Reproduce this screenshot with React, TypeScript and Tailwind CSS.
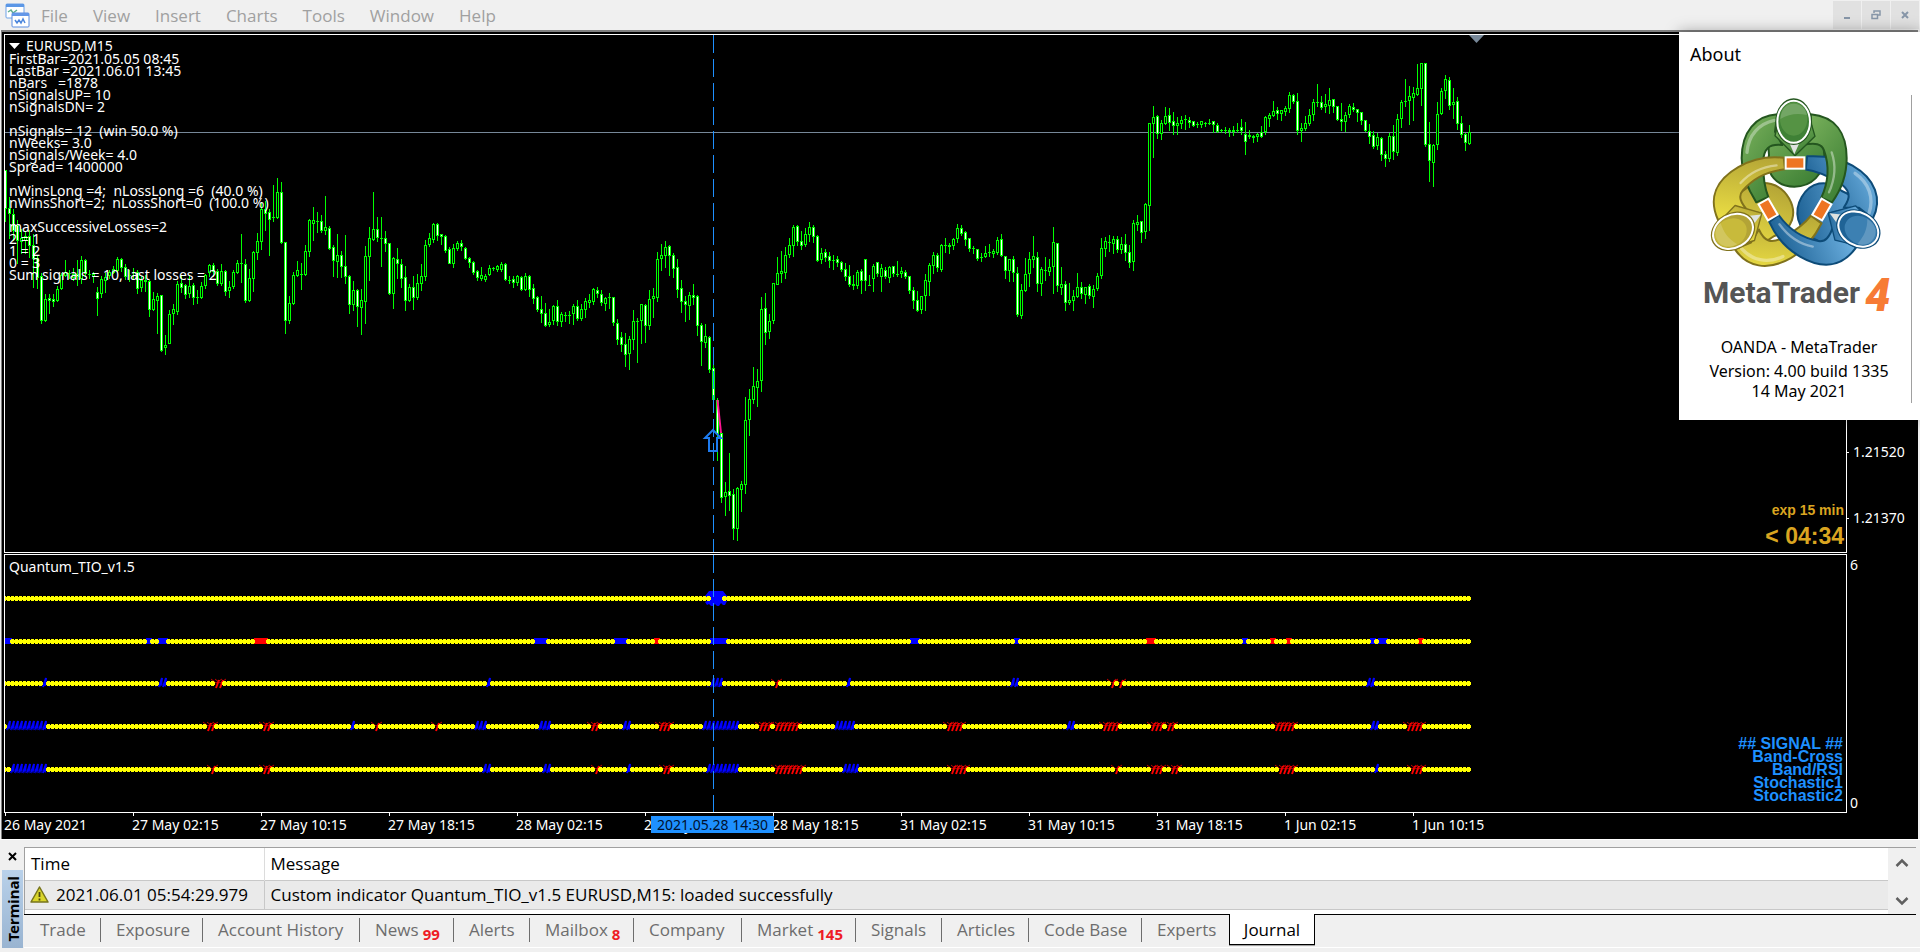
import type { ReactNode } from "react";

const SANS = "font-['Open_Sans','Noto_Sans',sans-serif]";
const CHART_FONT = "font-['Noto_Sans','DejaVu_Sans',sans-serif]";

const MENU = ["File", "View", "Insert", "Charts", "Tools", "Window", "Help"];

const COMMENT = [
  "FirstBar=2021.05.05 08:45",
  "LastBar =2021.06.01 13:45",
  "nBars   =1878",
  "nSignalsUP= 10",
  "nSignalsDN= 2",
  "",
  "nSignals= 12  (win 50.0 %)",
  "nWeeks= 3.0",
  "nSignals/Week= 4.0",
  "Spread= 1400000",
  "",
  "nWinsLong =4;  nLossLong =6  (40.0 %)",
  "nWinsShort=2;  nLossShort=0  (100.0 %)",
  "",
  "maxSuccessiveLosses=2",
  "2 = 1",
  "1 = 2",
  "0 = 3",
  "Sum signals = 10, last losses = 2",
];

const TIMES = [
  "26 May 2021",
  "27 May 02:15",
  "27 May 10:15",
  "27 May 18:15",
  "28 May 02:15",
  "28 May 10:15",
  "28 May 18:15",
  "31 May 02:15",
  "31 May 10:15",
  "31 May 18:15",
  "1 Jun 02:15",
  "1 Jun 10:15",
];

const TABS: { label: string; width: string; count?: number }[] = [
  { label: "Trade", width: "w-[76px]" },
  { label: "Exposure", width: "w-[102px]" },
  { label: "Account History", width: "w-[157px]" },
  { label: "News", width: "w-[94px]", count: 99 },
  { label: "Alerts", width: "w-[76px]" },
  { label: "Mailbox", width: "w-[104px]", count: 8 },
  { label: "Company", width: "w-[108px]" },
  { label: "Market", width: "w-[114px]", count: 145 },
  { label: "Signals", width: "w-[86px]" },
  { label: "Articles", width: "w-[87px]" },
  { label: "Code Base", width: "w-[113px]" },
  { label: "Experts", width: "w-[87px]" },
];

// one bar per record: high, body top, body bottom, low, direction
const BARS = `
170 170 208 221 d,197 208 213 238 d,209 214 230 240 d,220 225 240 263 d,229 238 241 253 u,231 236 240 253 u,230 236 245 257 d,234 245 258 287 d,
255 258 277 288 d,273 276 320 323 d,294 299 320 321 u,294 298 300 313 d,294 299 301 306 d,286 289 300 301 u,273 275 288 289 u,260 272 275 276 u,
270 273 273 278 u,268 274 277 280 u,260 274 276 285 d,256 260 278 283 u,259 260 273 276 d,270 274 274 278 u,272 274 276 282 u,287 292 298 315 d,
276 279 293 297 u,273 277 280 292 u,270 272 275 278 u,266 269 272 273 u,257 259 270 272 u,258 259 267 271 d,264 267 276 279 d,270 275 275 281 u,
268 272 272 279 u,270 272 288 293 d,276 280 287 291 u,275 280 281 291 u,280 281 309 316 d,292 299 309 310 u,293 296 300 333 u,295 295 350 351 d,
335 345 347 354 u,310 314 343 343 u,304 309 313 324 u,281 284 311 314 u,275 283 287 292 d,284 285 294 298 d,275 286 293 297 u,283 285 297 304 d,
290 297 297 303 u,282 286 297 298 u,274 275 285 288 u,264 265 272 276 u,263 265 271 276 d,269 271 283 285 d,264 271 283 285 u,270 271 291 295 d,
281 287 290 297 u,270 272 286 288 u,260 263 272 273 u,234 263 263 282 u,259 264 300 302 d,269 278 300 301 u,251 252 278 291 u,233 241 252 259 u,
203 209 241 249 u,201 209 213 230 d,209 212 219 255 d,185 217 217 221 u,178 192 217 218 u,182 192 242 243 d,242 242 320 333 d,296 303 320 323 u,
272 275 303 304 u,261 270 275 276 u,263 274 274 289 u,245 251 274 275 u,219 220 251 256 u,207 220 223 240 u,212 221 221 232 u,215 221 230 232 d,
196 227 230 234 u,226 228 248 249 d,245 247 260 276 d,234 255 261 277 u,251 255 266 277 d,235 266 276 283 d,275 276 304 313 d,281 290 304 310 u,
289 290 306 326 d,289 300 307 334 u,246 256 301 323 u,227 238 256 280 u,192 229 239 240 u,217 229 237 241 d,217 238 238 266 u,231 238 243 251 d,
243 243 293 294 d,257 258 293 308 u,248 259 263 278 d,259 264 278 287 d,266 277 300 310 d,284 287 300 301 u,276 287 297 309 d,274 283 297 299 u,
264 276 283 290 u,240 245 276 280 u,233 238 244 246 u,223 224 239 242 u,223 224 235 240 d,234 234 236 244 d,235 236 250 252 d,247 249 263 263 d,
244 248 263 267 u,241 243 248 250 u,240 243 246 250 d,247 248 258 259 d,257 258 262 267 d,261 262 272 274 d,270 271 277 280 d,267 275 278 280 u,
274 276 279 281 u,265 268 274 275 u,267 268 268 270 u,265 266 269 271 u,262 264 269 271 u,263 264 279 280 d,276 280 280 283 u,276 279 282 287 d,
275 276 282 285 u,276 277 289 290 d,273 276 289 290 u,275 276 289 296 d,284 288 298 303 d,296 297 309 311 d,296 309 313 322 d,303 313 325 326 d,
309 322 324 326 u,305 306 320 324 u,300 306 321 325 d,312 314 321 326 u,312 315 315 321 u,311 315 315 323 u,304 306 313 324 u,300 306 318 320 d,
304 309 318 320 u,298 301 309 317 u,294 300 302 307 u,288 289 301 304 u,287 290 293 297 d,290 294 302 305 d,297 298 303 310 u,293 297 297 308 u,
297 297 322 325 d,319 323 339 344 d,332 337 344 351 d,333 344 354 366 d,336 339 353 369 u,310 321 339 349 u,318 321 321 362 u,304 304 320 343 u,
304 305 325 342 d,290 299 325 329 u,288 296 298 317 u,252 259 297 301 u,244 255 258 270 u,241 247 255 267 u,245 246 255 275 d,253 255 268 277 d,
259 267 289 297 d,280 288 301 312 d,296 301 304 321 d,292 295 305 319 u,284 295 297 304 d,295 296 325 335 d,323 325 341 365 d,324 336 342 347 u,
336 337 369 372 d,365 368 399 400 d,398 400 433 460 d,432 433 497 502 d,482 492 496 515 u,453 491 495 510 d,489 494 528 539 d,487 488 528 540 u,
481 484 489 511 u,397 420 484 493 u,389 399 419 435 u,367 386 399 403 u,369 381 387 406 u,297 309 380 391 u,293 308 332 344 d,314 321 331 338 u,
283 283 320 323 u,257 273 284 284 u,251 271 273 282 u,247 255 272 278 u,238 245 254 257 u,225 227 245 256 u,225 226 241 245 d,231 241 245 249 d,
228 234 244 246 u,222 227 234 241 u,225 227 236 242 d,235 236 260 261 d,248 253 259 263 u,249 252 257 261 d,252 256 260 267 d,255 260 260 269 u,
256 259 262 266 d,261 262 269 271 d,263 269 276 280 d,265 276 284 286 d,275 284 285 289 u,270 272 285 288 u,269 271 280 293 d,259 259 280 290 d,
275 285 285 285 u,264 266 278 291 u,262 262 273 276 d,264 268 276 291 u,267 270 276 278 d,266 267 277 282 u,266 266 273 276 d,261 274 274 276 u,
267 271 273 277 u,270 272 276 278 d,276 276 290 293 d,287 290 300 308 d,291 300 310 311 d,296 296 309 313 u,274 280 295 310 u,263 265 281 295 u,
252 255 265 273 u,253 255 267 271 d,244 245 269 271 u,238 245 245 252 u,243 245 246 253 u,238 239 245 249 u,224 228 238 242 u,225 228 233 235 d,
231 232 239 245 d,238 238 248 251 d,246 248 248 253 u,249 249 258 260 d,253 257 257 261 u,246 253 256 257 u,244 252 252 256 u,249 251 253 257 u,
237 240 252 254 u,234 239 255 256 d,256 256 270 278 d,259 259 270 281 u,256 259 272 281 d,267 273 314 316 d,284 290 315 318 u,258 274 290 291 u,
252 259 273 286 u,236 256 259 267 u,252 257 283 291 d,267 269 283 295 u,257 270 270 280 u,259 267 271 275 u,227 242 266 293 u,243 243 285 291 d,
267 284 287 294 u,281 284 302 310 d,283 300 302 304 u,290 296 300 310 u,273 287 296 297 u,282 287 293 298 d,287 287 294 303 u,284 286 295 298 d,
285 289 296 307 u,273 276 288 290 u,238 248 275 278 u,237 241 248 256 u,235 242 242 251 u,236 239 243 253 u,236 239 249 252 d,237 244 249 253 u,
234 244 252 260 d,245 252 262 267 d,220 223 261 270 u,215 222 224 230 u,221 221 232 242 d,203 204 231 238 u,123 123 205 230 u,106 117 123 157 u,
115 116 133 138 d,120 123 133 139 u,107 116 123 124 u,108 115 122 130 d,112 121 125 134 d,117 123 125 134 u,116 120 123 128 u,115 119 119 129 u,
117 120 122 127 d,121 121 125 126 d,122 124 124 127 u,121 121 124 127 u,122 123 123 126 u,119 123 123 124 u,121 121 124 132 d,123 125 131 132 d,
129 130 130 132 u,127 130 130 133 u,128 130 131 136 u,126 130 131 135 u,123 130 130 132 u,119 127 130 134 d,122 134 141 154 d,130 135 136 138 u,
135 136 137 142 u,133 134 136 141 u,126 132 136 137 d,116 117 131 134 u,113 115 118 126 u,101 111 115 116 u,107 110 113 119 d,110 110 113 120 u,
106 108 111 115 u,92 95 108 112 u,94 95 101 103 d,93 101 130 134 d,123 128 130 141 u,116 123 128 130 u,109 115 123 125 u,99 102 114 120 u,
84 102 102 106 u,96 102 107 109 d,94 104 106 112 u,88 100 105 113 u,99 99 106 112 d,106 106 119 120 d,103 119 121 130 d,112 115 121 131 u,
104 106 114 117 u,103 107 109 111 d,109 109 112 121 d,112 112 120 124 d,120 120 130 131 d,124 131 136 143 d,131 135 146 148 d,133 137 145 149 u,
137 138 154 160 d,151 154 158 166 d,133 136 158 161 u,125 136 151 159 d,114 119 152 155 u,100 102 118 127 u,79 101 101 106 u,86 96 100 124 u,
87 93 97 120 u,64 88 94 95 u,63 63 88 105 u,63 63 144 146 d,122 144 160 181 d,144 145 162 186 u,102 114 144 149 u,88 91 113 114 u,
75 79 90 98 u,77 80 105 109 d,88 102 104 118 u,97 101 123 129 d,116 123 134 137 d,133 134 142 150 d,125 132 143 144 u`
  .trim()
  .split(",")
  .map((record) => {
    const [high, top, bottom, low, dir] = record.trim().split(" ");
    return { high: +high, top: +top, bottom: +bottom, low: +low, down: dir === "d" };
  });

const barX = (i: number) => 5 + 4 * i;

type Run = [from: number, to: number, color: "b" | "r"];

const ROWS: { y: number; kind: "blob" | "square" | "arrow"; runs: Run[] }[] = [
  { y: 598, kind: "blob", runs: [[177, 179, "b"]] },
  {
    y: 641,
    kind: "square",
    runs: [
      [0, 1, "b"], [36, 36, "b"], [39, 40, "b"], [63, 65, "r"], [133, 135, "b"], [153, 155, "b"],
      [163, 163, "r"], [177, 180, "b"], [227, 228, "b"], [253, 253, "b"], [286, 287, "r"], [310, 310, "b"],
      [317, 317, "r"], [321, 321, "r"], [342, 342, "b"], [344, 345, "b"], [354, 354, "r"],
    ],
  },
  {
    y: 683,
    kind: "arrow",
    runs: [
      [10, 10, "b"], [39, 40, "b"], [53, 54, "r"], [121, 121, "b"], [177, 179, "b"], [193, 193, "r"],
      [211, 211, "b"], [252, 253, "b"], [277, 277, "r"], [279, 279, "r"], [341, 342, "b"],
    ],
  },
  {
    y: 726,
    kind: "arrow",
    runs: [
      [1, 10, "b"], [51, 52, "r"], [65, 66, "r"], [87, 87, "b"], [93, 93, "r"], [108, 108, "r"],
      [118, 120, "b"], [134, 136, "b"], [147, 148, "r"], [155, 156, "b"], [164, 166, "r"], [175, 183, "b"],
      [189, 191, "r"], [193, 198, "r"], [208, 212, "b"], [236, 239, "r"], [266, 267, "b"], [275, 278, "r"],
      [287, 289, "r"], [291, 292, "r"], [318, 322, "r"], [342, 343, "b"], [351, 354, "r"],
    ],
  },
  {
    y: 769,
    kind: "arrow",
    runs: [
      [2, 10, "b"], [52, 52, "r"], [65, 66, "r"], [120, 121, "b"], [135, 136, "b"], [148, 148, "r"],
      [156, 156, "b"], [165, 166, "r"], [176, 183, "b"], [193, 199, "r"], [210, 213, "b"], [237, 240, "r"],
      [278, 278, "r"], [287, 289, "r"], [292, 293, "r"], [319, 322, "r"], [343, 343, "b"], [352, 354, "r"],
    ],
  },
];

function Candles() {
  return (
    <g shapeRendering="crispEdges">
      {BARS.map((bar, i) => {
        const x = barX(i);
        const height = bar.bottom - bar.top + 1;
        return (
          <g key={i}>
            <rect x={x} y={bar.high} width={1} height={bar.low - bar.high + 1} fill="#00ff00" />
            <rect x={x - 1} y={bar.top} width={3} height={height} fill="#00ff00" />
            {height > 2 && (
              <rect x={x} y={bar.top + 1} width={1} height={height - 2} fill={bar.down ? "#fff" : "#000"} />
            )}
          </g>
        );
      })}
    </g>
  );
}

function SignalRow({ y, kind, runs }: (typeof ROWS)[number]) {
  const marked = new Map<number, "b" | "r">();
  runs.forEach(([from, to, color]) => {
    for (let i = from; i <= to; i++) marked.set(i, color);
  });
  const dots = BARS.map((_, i) => i).filter((i) => !marked.has(i));
  const marks = [...marked];
  return (
    <g>
      {kind === "square" &&
        marks.map(([i, c]) => (
          <rect key={i} x={barX(i) - 3} y={y - 3} width={6} height={6} fill={c === "b" ? "#0000ff" : "#ff0000"} />
        ))}
      {kind === "arrow" &&
        marks.map(([i, c]) => {
          const x = barX(i) - 1;
          return c === "b" ? (
            <g key={i}>
              <path d={`M${x - 5} ${y + 4}L${x + 1} ${y}L${x + 6} ${y + 4}`} stroke="#00008b" fill="none" />
              <path d={`M${x - 1} ${y + 4}L${x + 2} ${y - 5}L${x + 1} ${y + 3}`} stroke="#0000ff" strokeWidth={2} fill="none" />
            </g>
          ) : (
            <g key={i}>
              <path d={`M${x - 5} ${y - 4}L${x} ${y}L${x + 6} ${y - 4}`} stroke="#c00000" fill="none" />
              <path d={`M${x + 3} ${y - 3}L${x} ${y + 5}`} stroke="#ff0000" strokeWidth={2} fill="none" />
            </g>
          );
        })}
      {kind === "blob" && (
        <path
          d={`M705 ${y - 2}l4-5h14l4 5v2l-4 2 4 1-2 4h-2l-2-2-2 3h-2l-2-2-2 2h-2l-2-2-2 1-2-3 4-2-4-2z`}
          fill="#0000ff"
        />
      )}
      <g fill="#ffff00" shapeRendering="crispEdges">
        {dots.map((i) => (
          <path key={i} d={`M${barX(i) - 2} ${y - 2}h3v1h1v3h-1v1h-3v-1h-1v-3h1z`} />
        ))}
      </g>
    </g>
  );
}

type Person = { id: string; light: string; mid: string; dark: string; turn: string };

const PEOPLE: Person[] = [
  { id: "green", light: "#7db45e", mid: "#3f8136", dark: "#24561f", turn: "" },
  { id: "blue", light: "#74b8e8", mid: "#1f6396", dark: "#0d4b78", turn: "rotate(120 378 587)" },
  { id: "yellow", light: "#f2e545", mid: "#b3a436", dark: "#80721c", turn: "rotate(240 378 587)" },
];

function Figure({ person, part }: { person: Person; part: "body" | "near" | "far" | "head" }) {
  const { id, mid, dark } = person;
  const line = { stroke: dark, strokeWidth: 6, strokeLinejoin: "round" as const };
  if (part === "body") {
    return (
      <g>
        <path d="M300 470C290 380 330 350 376 350s86 30 90 120c0 60-40 95-90 95s-88-35-76-95z" fill={`url(#${id})`} {...line} />
        <path d="M312 408l66 66 68-70-10-24-122 0z" fill={dark} opacity="0.5" />
        <path d="M362 430l14 38 14-38z" fill="#dfe3e0" />
      </g>
    );
  }
  if (part === "far") {
    return (
      <g>
        <path
          d="M218 480C218 400 260 352 325 348L318 400 340 440C300 436 284 450 282 492c0 30 2 70 16 104l-36 16C236 572 218 530 218 480z"
          fill={`url(#${id})`}
          {...line}
        />
        <path d="M234 462C238 410 270 376 316 366" fill="none" stroke="#fff" strokeOpacity="0.35" strokeWidth="10" strokeLinecap="round" />
      </g>
    );
  }
  if (part === "near") {
    return (
      <g>
        <path
          d="M425 348C500 355 533 405 533 480c0 50-16 94-44 132l-32-14c20-44 26-92 8-142C458 436 440 432 400 440l28-36z"
          fill={`url(#${id})`}
          {...line}
        />
        <path d="M488 462c14 40 8 84-8 120" fill="none" stroke="#fff" strokeOpacity="0.4" strokeWidth="7" strokeLinecap="round" />
      </g>
    );
  }
  return (
    <g>
      <path d="M326 380l-8 32 60 60 60-58-10-34z" fill={`url(#${id})`} {...line} strokeWidth="4" />
      <path d="M362 436l14 32 14-32z" fill="#dfe3e0" />
      <ellipse cx="374" cy="370" rx="55" ry="70" fill={dark} />
      <ellipse cx="374" cy="370" rx="49" ry="63" fill={mid} stroke="#fff" strokeWidth="6" />
      <ellipse cx="374" cy="362" rx="41" ry="50" fill={person.light} opacity="0.35" />
      <path d="M334 362c2-30 18-46 40-46s38 16 40 34c-28-6-54-4-80 12z" fill="#fff" opacity="0.18" />
    </g>
  );
}

function Logo() {
  return (
    <svg viewBox="90 290 600 660" className="h-[220px] w-[200px] overflow-visible" role="img" aria-label="MetaTrader 4">
      <defs>
        {PEOPLE.map((p) => (
          <linearGradient key={p.id} id={p.id} x1="0" y1="0" x2="0.7" y2="1">
            <stop offset="0" stopColor={p.light} />
            <stop offset="1" stopColor={p.mid} />
          </linearGradient>
        ))}
      </defs>
      {(["body", "far", "near", "head"] as const).map((part) => (
        <g key={part}>
          {PEOPLE.map((p) => (
            <g key={p.id} transform={p.turn}>
              <Figure person={p} part={part} />
            </g>
          ))}
        </g>
      ))}
      {[0, 120, 240].map((turn) => (
        <rect
          key={turn}
          x="350"
          y="477"
          width="56"
          height="34"
          fill="#ee7522"
          stroke="#fff"
          strokeWidth="6"
          transform={`rotate(${turn} 378 587)`}
        />
      ))}
      <text x="102" y="913" fontFamily="Roboto, sans-serif" fontWeight="700" fontSize="90" fill="#555">
        MetaTrader
      </text>
      <text x="588" y="938" fontFamily="Roboto, sans-serif" fontWeight="900" fontStyle="italic" fontSize="136" fill="#f77b35">
        4
      </text>
    </svg>
  );
}

function AboutPanel() {
  return (
    <aside className={`absolute top-8 right-0 z-10 h-[388px] w-[241px] bg-white text-black shadow-[0_0_14px_rgba(0,0,0,0.35)] ${CHART_FONT}`}>
      <h2 className="pt-2.5 pl-[11px] text-lg leading-6">About</h2>
      <div className="mt-[29px] mr-2 flex h-[308px] flex-col items-center border-r border-[#a0a0a0] pl-2 text-base">
        <Logo />
        <p className="mt-5 leading-6">OANDA - MetaTrader</p>
        <p className="leading-6">Version: 4.00 build 1335</p>
        <p className="leading-4">14 May 2021</p>
      </div>
    </aside>
  );
}

function WindowButton({ label, children }: { label: string; children: ReactNode }) {
  return (
    <button aria-label={label} className="flex h-7 w-7 items-center justify-center bg-[#e1e1e1]">
      <svg width="10" height="10" viewBox="0 0 10 10" fill="none" stroke="#8796a8" strokeWidth="2">
        {children}
      </svg>
    </button>
  );
}

function MenuBar() {
  return (
    <header className="flex h-[30px] items-center bg-[#f0f0f0] pl-[5px]">
      <svg width="25" height="25" viewBox="0 0 25 25" className="mr-[11px]" aria-hidden="true">
        <rect x="1" y="1" width="18" height="14" rx="1" fill="#fff" stroke="#6ea3e8" />
        <path d="M1 1h18v3H1z" fill="#5b97e6" />
        <path d="M3 9l3-2 2 3 4-3" fill="none" stroke="#5fae8f" strokeWidth="1.5" />
        <rect x="7" y="10" width="17" height="14" rx="1" fill="#fff" stroke="#5b8de0" />
        <path d="M7 10h17v3H7z" fill="#6397e8" />
        <path d="M10 17l2 3 2-3 2 3 2-4 2 4" fill="none" stroke="#4c86dc" strokeWidth="1.5" />
      </svg>
      <nav className="flex flex-1 gap-[25px]">
        {MENU.map((item) => (
          <button key={item} className="pt-0.5 text-[17px] leading-6 text-[#a0a0a0]">
            {item}
          </button>
        ))}
      </nav>
      <div className="flex gap-px pr-px">
        <WindowButton label="Minimize">
          <path d="M2 8h6" />
        </WindowButton>
        <WindowButton label="Restore">
          <path d="M3 3V1h6v4H7" strokeWidth="1.5" />
          <path d="M1 4.5h5.500v4H1z" strokeWidth="1.5" />
        </WindowButton>
        <WindowButton label="Close">
          <path d="M2 2l6 6M8 2L2 8" />
        </WindowButton>
      </div>
    </header>
  );
}

function PriceWindow() {
  return (
    <div className="flex h-[519px]">
      <div className="relative min-w-0 flex-1 border border-white">
        <svg className="block h-full w-full">
          <g transform="translate(-5 -35)">
            <path d="M5 132.500h1842" stroke="#778899" />
            <path d="M1469 35h15l-7.500 8z" fill="#778899" />
            <Candles />
            <path d="M713.500 35V552" stroke="#1e90ff" strokeDasharray="18 6" />
            <path d="M717.500 400L721 433" stroke="#ff1493" strokeWidth="2" />
            <path d="M713 430l8 8h-4v13h-8v-13h-4z" fill="none" stroke="#1e7cf0" strokeWidth="2" />
          </g>
        </svg>
        <div className="absolute top-0 left-1 text-sm">
          <p className="flex h-[18px] items-center pt-1">
            <svg width="11" height="6" viewBox="0 0 11 6" className="mr-1.5" aria-hidden="true">
              <path d="M0 0h11L5.500 6z" fill="#fff" />
            </svg>
            EURUSD,M15
          </p>
          <pre className={`text-sm leading-3 ${CHART_FONT}`}>{COMMENT.join("\n")}</pre>
        </div>
        <div className="absolute right-0.5 bottom-0.5 text-right font-['Liberation_Sans',Arial,sans-serif] font-bold text-[#daa520]">
          <p className="text-sm leading-6">exp 15 min</p>
          <p className="text-[23px] leading-7">&lt; 04:34</p>
        </div>
      </div>
      <div className="flex w-[71px] flex-col justify-end pb-0.5 text-sm">
        {["1.21520", "1.21370"].map((price) => (
          <div key={price} className="flex h-[66px] items-center gap-1">
            <span className="h-px w-0.5 bg-white" />
            {price}
          </div>
        ))}
      </div>
    </div>
  );
}

function IndicatorWindow() {
  return (
    <div className="mt-px flex h-[259px]">
      <div className="relative min-w-0 flex-1 border border-white">
        <svg className="block h-full w-full">
          <g transform="translate(-5 -555)">
            {ROWS.map((row) => (
              <SignalRow key={row.y} {...row} />
            ))}
            <path d="M713.500 555V812" stroke="#1e90ff" strokeDasharray="18 6" />
          </g>
        </svg>
        <p className="absolute top-0.5 left-1 text-sm">Quantum_TIO_v1.5</p>
        <div className="absolute right-[3px] bottom-2.5 text-right font-['Liberation_Sans',Arial,sans-serif] text-base leading-[13px] font-bold text-[#1e90ff]">
          <p>## SIGNAL ##</p>
          <p>Band-Cross</p>
          <p>Band/RSI</p>
          <p>Stochastic1</p>
          <p>Stochastic2</p>
        </div>
      </div>
      <div className="flex w-[71px] flex-col justify-between pt-px pl-[3px] text-sm">
        <span>6</span>
        <span>0</span>
      </div>
    </div>
  );
}

function TimeAxis() {
  return (
    <div className="relative flex h-[26px] overflow-hidden text-sm leading-[18px]">
      {TIMES.map((time) => (
        <div key={time} className="w-32 shrink-0">
          <span className="ml-px block h-[3px] w-px bg-white" />
          {time}
        </div>
      ))}
      <div className="absolute top-[3px] left-[647px] h-[17px] w-[123px] bg-[#1e90ff] text-center text-[#00102e]">
        2021.05.28 14:30
      </div>
    </div>
  );
}

function WarningIcon() {
  return (
    <svg width="19" height="17" viewBox="0 0 19 17" className="shrink-0" aria-hidden="true">
      <path d="M9.500 1L18 16H1z" fill="#d9d52b" stroke="#77741c" strokeWidth="1.500" strokeLinejoin="round" />
      <path d="M9.500 6v5M9.500 12.500v2" stroke="#4d4a10" strokeWidth="1.800" />
    </svg>
  );
}

function Terminal() {
  return (
    <section className="flex h-[106px] bg-[#f0f0f0] text-black">
      <div className="flex w-6 flex-col items-center pr-px pl-0.5">
        <button aria-label="Close terminal" className="mb-1 flex h-[19px] items-center">
          <svg width="9" height="9" viewBox="0 0 9 9" aria-hidden="true">
            <path d="M1 1l7 7M8 1L1 8" stroke="#000" strokeWidth="2" />
          </svg>
        </button>
        <div className="flex h-[78px] w-[21px] items-center justify-center bg-linear-to-b from-[#b9d1ea] to-[#99b4d1]">
          <span className={`rotate-180 text-[15px] leading-5 font-bold [writing-mode:vertical-rl] ${CHART_FONT}`}>Terminal</span>
        </div>
      </div>
      <div className="flex min-w-0 flex-1 flex-col">
        <div className="mr-1 flex h-[67px] border-t border-l border-[#a0a0a0] bg-white">
          <table className="h-[62px] flex-1 border-collapse text-[17px]">
            <thead>
              <tr className="h-8 border-b border-[#c8c8c8] text-left">
                <th className="w-[239px] border-r border-[#dcdcdc] pl-1.5 font-normal">Time</th>
                <th className="pl-1.5 font-normal">Message</th>
              </tr>
            </thead>
            <tbody>
              <tr className="h-[29px] border-b border-[#c8c8c8] bg-[#eaeaea]">
                <td className="border-r border-[#c8c8c8] pl-[5px]">
                  <span className="flex items-center gap-[7px] leading-6 whitespace-nowrap">
                    <WarningIcon />
                    2021.06.01 05:54:29.979
                  </span>
                </td>
                <td className="pl-1.5">Custom indicator Quantum_TIO_v1.5 EURUSD,M15: loaded successfully</td>
              </tr>
            </tbody>
          </table>
          <div className="flex w-7 flex-col items-center justify-between bg-[#f0f0f0] pt-2.5 pb-2">
            <svg width="14" height="10" viewBox="0 0 14 10" aria-hidden="true">
              <path d="M1.500 8L7 2.500 12.500 8" fill="none" stroke="#606060" strokeWidth="2.500" />
            </svg>
            <svg width="14" height="10" viewBox="0 0 14 10" aria-hidden="true">
              <path d="M1.500 2L7 7.500 12.500 2" fill="none" stroke="#606060" strokeWidth="2.500" />
            </svg>
          </div>
        </div>
        <nav className="mr-1 flex h-[33px] items-start border-t border-black pl-px text-[17px] text-[#6d6d6d]">
          {TABS.map((tab, i) => (
            <button
              key={tab.label}
              className={`mt-[3px] flex h-6 shrink-0 items-center gap-1 pl-[15px] leading-6 whitespace-nowrap ${tab.width} ${
                i < TABS.length - 1 ? "border-r border-[#6d6d6d]" : ""
              }`}
            >
              {tab.label}
              {tab.count && <span className="pt-2 text-[15px] font-bold text-[#ee1c25]">{tab.count}</span>}
            </button>
          ))}
          <button className="-mt-px h-[31px] w-[86px] shrink-0 border border-t-0 border-black bg-white pt-px text-black shadow-[0_1px_0_#a0a0a0]">
            Journal
          </button>
        </nav>
        <div className="border-t border-white" />
      </div>
    </section>
  );
}

export default function App() {
  return (
    <div className={`relative flex min-h-screen flex-col bg-[#f0f0f0] ${SANS}`}>
      <MenuBar />
      <main className={`mr-0.5 ml-px border-t-2 border-l border-[#808080] bg-black pt-0.5 pl-0.5 text-white ${CHART_FONT}`}>
        <PriceWindow />
        <IndicatorWindow />
        <TimeAxis />
      </main>
      <div className="h-2 border-t border-white" />
      <Terminal />
      <div className="border-t border-[#a0a0a0]" />
      <AboutPanel />
    </div>
  );
}
